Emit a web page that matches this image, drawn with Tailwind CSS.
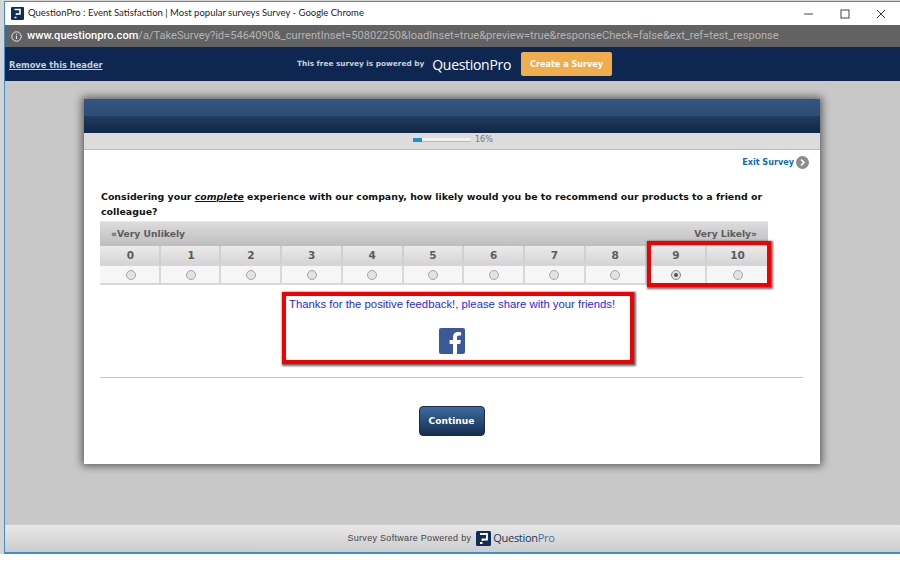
<!DOCTYPE html>
<html>
<head>
<meta charset="utf-8">
<script src="https://cdn.jsdelivr.net/npm/@tailwindcss/browser@4"></script>
</head>
<body class="w-[900px] h-[577px] overflow-hidden bg-white font-['Liberation_Sans',sans-serif]">
<div class="h-[554px] bg-[#d4d4d4] pl-[4px] pt-px">
  <div class="h-[553px] flex flex-col border-l border-t border-b-2 border-[#3b8fd8] border-b-[#3b8fd8]">
    <!-- title bar -->
    <div class="h-[23px] bg-white flex items-center pl-[6px] shrink-0">
      <svg width="13" height="13" viewBox="0 0 13 13" class="shrink-0"><rect width="13" height="13" rx="1" fill="#0f2d56"/><path d="M3.500 2.500h5.500v4.500H5.500v1M3.500 10.500h2" stroke="#fff" stroke-width="1.600" fill="none"/></svg>
      <span class="ml-[4px] text-[9.500px] text-[#222] font-['Lato',sans-serif] whitespace-nowrap">QuestionPro : Event Satisfaction | Most popular surveys Survey - Google Chrome</span>
      <div class="ml-auto flex items-center gap-[26px] pr-[14px]">
        <svg width="10" height="10" viewBox="0 0 10 10"><path d="M0 5h9" stroke="#666" stroke-width="1.200"/></svg>
        <svg width="10" height="10" viewBox="0 0 10 10"><rect x="1" y="1" width="8" height="8" fill="none" stroke="#444" stroke-width="1"/></svg>
        <svg width="10" height="10" viewBox="0 0 10 10"><path d="M1 1l8 8M9 1l-8 8" stroke="#333" stroke-width="1"/></svg>
      </div>
    </div>
    <!-- url bar -->
    <div class="h-[22px] bg-[#626262] flex items-center pl-[6px] shrink-0 text-[11.100px] font-['Roboto',sans-serif] whitespace-nowrap overflow-hidden">
      <svg width="11" height="11" viewBox="0 0 11 11" class="shrink-0"><circle cx="5.500" cy="5.500" r="4.700" fill="none" stroke="#e8e8e8" stroke-width="1"/><path d="M5.500 4.800v3.200M5.500 2.700v1" stroke="#e8e8e8" stroke-width="1.100"/></svg>
      <span class="ml-[5px] text-white font-medium">www.questionpro.com</span><span class="text-[#b4b4b4]">/a/TakeSurvey?id=5464090&amp;_currentInset=50802250&amp;loadInset=true&amp;preview=true&amp;responseCheck=false&amp;ext_ref=test_response</span>
    </div>
    <!-- promo header -->
    <div class="relative h-[34px] bg-[#0e2750] flex items-center justify-center pl-[4px] shrink-0">
      <a class="absolute left-[4px] top-[12px] text-[8.300px] font-bold underline text-[#c5cede] font-['DejaVu_Sans',sans-serif]">Remove this header</a>
      <span class="text-[7.350px] font-bold text-[#c9d0dc] font-['DejaVu_Sans',sans-serif]">This free survey is powered by</span>
      <span class="ml-[8px] text-[14px] text-white font-['Open_Sans',sans-serif] tracking-[-0.3px]">QuestionPro</span>
      <span class="ml-[10px] w-[91px] h-[24px] bg-[#f0ad4e] rounded-[2px] flex items-center justify-center text-[8.100px] font-bold text-white font-['DejaVu_Sans',sans-serif]">Create a Survey</span>
    </div>
    <!-- main -->
    <div class="flex-1 bg-[#c8c8c8] pt-[18px] pl-[79px]">
      <div class="relative w-[736px] h-[365px] bg-white shadow-[0_0_8px_2px_rgba(0,0,0,0.55)] flex flex-col">
        <div class="h-[34px] shrink-0 bg-[linear-gradient(#34557f_0%,#2d4d75_50%,#1f3c60_52%,#102745_100%)]"></div>
        <div class="h-[17px] shrink-0 bg-[#dcdcdc] border-b border-[#bdbdbd] flex items-center pb-[3px] pl-[329px]">
          <div class="w-[58px] h-[4px] bg-[#f0f0f0] border-b border-[#bbb]">
            <div class="w-[9px] h-[4px] bg-[#1793d1]"></div>
          </div>
          <span class="ml-[4px] text-[8px] text-[#777] font-['DejaVu_Sans',sans-serif]">16%</span>
        </div>
        <div class="flex justify-end items-center pr-[11px] h-[24px] shrink-0">
          <span class="text-[8.100px] font-bold text-[#0b6bbd] font-['DejaVu_Sans',sans-serif]">Exit Survey</span>
          <svg width="13" height="13" viewBox="0 0 13 13" class="ml-[2px]"><circle cx="6.500" cy="6.500" r="6.500" fill="#8c8c8c"/><path d="M5 3.500l3 3-3 3" stroke="#fff" stroke-width="1.600" fill="none"/></svg>
        </div>
        <div class="pl-[17px] pr-[40px] pt-[15px] text-[9.420px] leading-[15px] font-bold text-[#111] font-['DejaVu_Sans',sans-serif] h-[47px] shrink-0">
          Considering your <em class="underline">complete</em> experience with our company, how likely would you be to recommend our products to a friend or colleague?
        </div>
        <!-- scale -->
        <div class="relative ml-[16px] w-[668px] h-[64px] shrink-0 font-['DejaVu_Sans',sans-serif] text-[#5c5c5c] font-bold text-[10.500px]">
          <div class="h-[25px] text-[9.200px] bg-[linear-gradient(#dcdcdc,#bebebe)] border-t border-[#e8e8e8] flex items-center justify-between px-[11px]">
            <span>«Very Unlikely</span><span>Very Likely»</span>
          </div>
          <div class="grid grid-cols-11 h-[20px] bg-[linear-gradient(#ebebeb,#d4d4d4)] border-b border-[#d8d8d8]">
            <div class="border-r-2 border-[#d0d0d0] flex items-center justify-center pl-[2px]">0</div>
            <div class="border-r-2 border-[#d0d0d0] flex items-center justify-center pl-[2px]">1</div>
            <div class="border-r-2 border-[#d0d0d0] flex items-center justify-center">2</div>
            <div class="border-r-2 border-[#d0d0d0] flex items-center justify-center">3</div>
            <div class="border-r-2 border-[#d0d0d0] flex items-center justify-center">4</div>
            <div class="border-r-2 border-[#d0d0d0] flex items-center justify-center">5</div>
            <div class="border-r-2 border-[#d0d0d0] flex items-center justify-center">6</div>
            <div class="border-r-2 border-[#d0d0d0] flex items-center justify-center">7</div>
            <div class="border-r-2 border-[#d0d0d0] flex items-center justify-center">8</div>
            <div class="border-r-2 border-[#d0d0d0] flex items-center justify-center">9</div>
            <div class="flex items-center justify-center">10</div>
          </div>
          <div class="grid grid-cols-11 h-[19px] bg-[#f6f6f6] border-b-2 border-[#d8d8d8]">
            <div class="border-r-2 border-[#d8d8d8] flex items-center justify-center pl-[3px]"><span class="size-[10px] rounded-full bg-[#e2e2e2] border border-[#a5a5a5]"></span></div>
            <div class="border-r-2 border-[#d8d8d8] flex items-center justify-center pl-[2px]"><span class="size-[10px] rounded-full bg-[#e2e2e2] border border-[#a5a5a5]"></span></div>
            <div class="border-r-2 border-[#d8d8d8] flex items-center justify-center"><span class="size-[10px] rounded-full bg-[#e2e2e2] border border-[#a5a5a5]"></span></div>
            <div class="border-r-2 border-[#d8d8d8] flex items-center justify-center"><span class="size-[10px] rounded-full bg-[#e2e2e2] border border-[#a5a5a5]"></span></div>
            <div class="border-r-2 border-[#d8d8d8] flex items-center justify-center"><span class="size-[10px] rounded-full bg-[#e2e2e2] border border-[#a5a5a5]"></span></div>
            <div class="border-r-2 border-[#d8d8d8] flex items-center justify-center"><span class="size-[10px] rounded-full bg-[#e2e2e2] border border-[#a5a5a5]"></span></div>
            <div class="border-r-2 border-[#d8d8d8] flex items-center justify-center"><span class="size-[10px] rounded-full bg-[#e2e2e2] border border-[#a5a5a5]"></span></div>
            <div class="border-r-2 border-[#d8d8d8] flex items-center justify-center"><span class="size-[10px] rounded-full bg-[#e2e2e2] border border-[#a5a5a5]"></span></div>
            <div class="border-r-2 border-[#d8d8d8] flex items-center justify-center"><span class="size-[10px] rounded-full bg-[#e2e2e2] border border-[#a5a5a5]"></span></div>
            <div class="border-r-2 border-[#d8d8d8] flex items-center justify-center"><span class="size-[10px] rounded-full bg-[#e2e2e2] border border-[#888] flex items-center justify-center"><span class="size-[4px] rounded-full bg-[#555]"></span></span></div>
            <div class="flex items-center justify-center"><span class="size-[10px] rounded-full bg-[#e2e2e2] border border-[#a5a5a5]"></span></div>
          </div>
          <div class="absolute left-[547px] top-[20px] w-[124px] h-[46px] border-[4px] border-[#f00000] shadow-[1px_1px_2px_1px_rgba(0,0,0,0.6)]"></div>
        </div>
        <!-- feedback -->
        <div class="ml-[198px] mt-[7px] w-[352px] h-[72px] shrink-0 border-[4px] border-[#f00000] shadow-[1px_1px_2px_1px_rgba(0,0,0,0.6)] flex flex-col items-center">
          <p class="self-start pl-[3px] text-[11.340px] leading-[16px] text-[#2a1ff5] whitespace-nowrap">Thanks for the positive feedback!, please share with your friends!</p>
          <svg width="26" height="26" viewBox="0 0 26 26" class="mt-[16px] ml-[-12px]"><rect width="26" height="26" rx="2" fill="#3b5998"/><path d="M18 26V16h3.300l.5-4H18V9.600c0-1.200.4-2 2-2h2.100V4.200c-.4 0-1.600-.2-3-.2-3 0-5.100 1.800-5.100 5.200V12h-3.400v4H14v10z" fill="#fff"/></svg>
        </div>
        <div class="mx-[16px] mt-[13px] w-[703px] border-t border-[#c4c4c4] shrink-0"></div>
        <div class="flex justify-center mt-[28px] ml-[-1px]">
          <span class="w-[66px] h-[30px] pt-[2px] rounded-[4px] border border-[#1c2c44] bg-[linear-gradient(#3c6ba0,#142f50)] flex items-center justify-center text-white text-[9.100px] font-bold font-['DejaVu_Sans',sans-serif]">Continue</span>
        </div>
      </div>
    </div>
    <!-- footer -->
    <div class="h-[27px] shrink-0 bg-[linear-gradient(#e8e8e8,#cccccc)] flex items-center justify-center pr-[3px]">
      <span class="text-[9px] tracking-[0.3px] text-[#444]">Survey Software Powered by</span>
      <svg width="15" height="15" viewBox="0 0 15 15" class="ml-[5px]"><rect width="15" height="15" rx="1.500" fill="#0f2d56"/><path d="M4 3h7v5.500H6.500v1.500M4 12h2.500" stroke="#fff" stroke-width="1.800" fill="none"/></svg>
      <span class="ml-[2px] text-[11px] tracking-[-0.3px] font-['Open_Sans',sans-serif] text-[#1b3558]">Question<span class="text-[#3d78ad]">Pro</span></span>
    </div>
  </div>
</div>
</body>
</html>
